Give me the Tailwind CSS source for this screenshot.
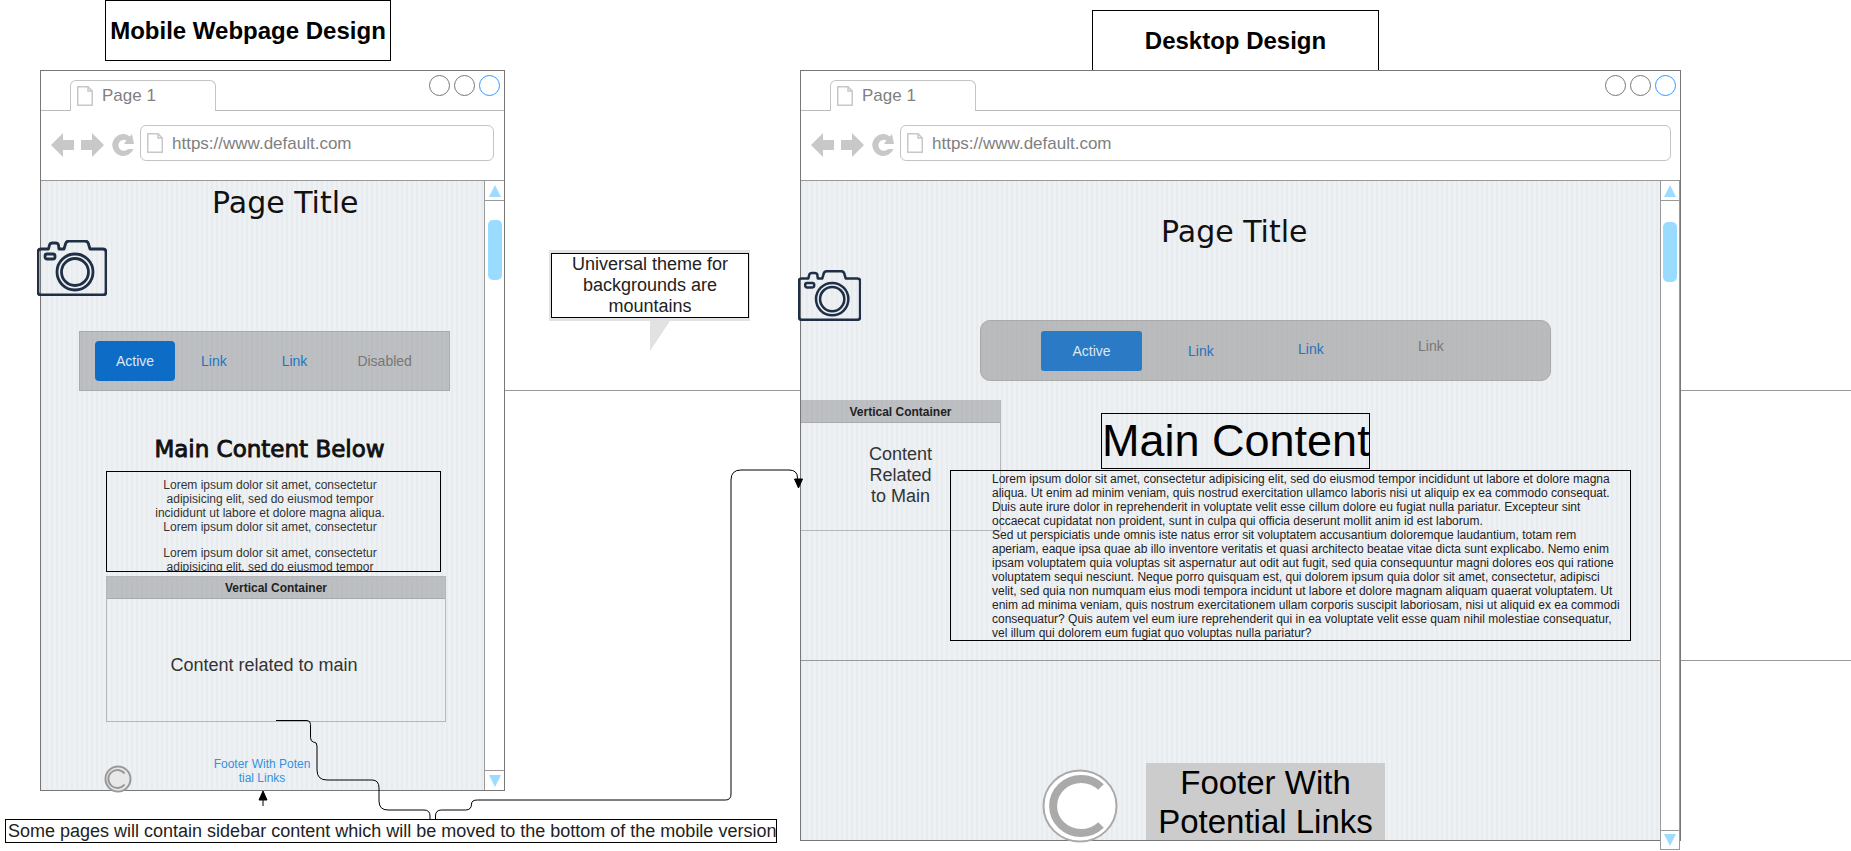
<!DOCTYPE html>
<html lang="en">
<head>
  <meta charset="UTF-8">
  <title>Mobile and Desktop Wireframes</title>
  <script src="https://cdn.jsdelivr.net/npm/@tailwindcss/browser@4"></script>
</head>
<body class="bg-white overflow-hidden font-['Liberation_Sans',Arial,sans-serif]">
  <!-- svg symbols used by both windows -->
  <svg class="hidden">
    <symbol id="doc" viewBox="0 0 16 20">
      <path d="M.75.75H11L15.25 5v14.25H.75zM11 .75V5h4.25" fill="#fff" stroke="#c8c8c8" stroke-width="1.5"/>
    </symbol>
    <symbol id="camera" viewBox="0 0 70 56">
      <g fill="none" stroke="#1f2f45" stroke-width="2.8" stroke-linejoin="round">
        <path d="M4 9h7.500l1-4q.5-2 3-2h3q2.500 0 3 2l.5 4h5l1.500-5q.5-3 3.500-3h16q3 0 3.500 3l1.500 5h13q3 0 3 3v40q0 3-3 3H4q-3 0-3-3V12q0-3 3-3z"/>
        <rect x="8" y="14" width="10" height="5" rx="2"/>
        <circle cx="38" cy="32" r="18"/>
        <circle cx="38" cy="32" r="13.500"/>
      </g>
    </symbol>
    <symbol id="back" viewBox="0 0 23 24"><path d="M0 12 12 0v7h11v10H12v7z" fill="#c8c8c8"/></symbol>
    <symbol id="forward" viewBox="0 0 23 24"><path d="M23 12 11 24v-7H0V7h11V0z" fill="#c8c8c8"/></symbol>
    <symbol id="reload" viewBox="0 0 22 22"><path d="M11 0a11 11 0 0 1 6.800 2.400L20 0l2 10H12l2.500-3.500A5.500 5.500 0 1 0 16 15h5.500A11 11 0 1 1 11 0z" fill="#c8c8c8"/></symbol>
  </svg>

  <main class="relative w-[1851px] h-[851px]">
    <!-- long rulers behind the windows -->
    <div class="absolute left-[40px] top-[390px] w-[1811px] h-px bg-[#999]"></div>
    <div class="absolute left-[1680px] top-[660px] w-[171px] h-px bg-[#999]"></div>

    <!-- diagram titles -->
    <div class="absolute left-[105px] top-0 w-[286px] h-[61px] border border-black flex items-center justify-center text-[24px] font-bold text-black">Mobile Webpage Design</div>
    <div class="absolute left-[1092px] top-[10px] w-[287px] h-[61px] border border-black flex items-center justify-center text-[24px] font-bold text-black">Desktop Design</div>

    <!-- mobile window -->
    <section class="absolute left-[40px] top-[70px] w-[465px] h-[721px] border border-[#777] bg-white flex flex-col">
      <div class="h-[40px] border-b border-[#bbb] flex items-end justify-between shrink-0">
        <div class="ml-[29px] -mb-px w-[146px] h-[31px] bg-white border border-b-0 border-[#c4c4c4] rounded-t-[6px] flex items-center pl-[6px] gap-[9px] text-[17px] text-[#808080]">
          <svg class="w-[16px] h-[20px]"><use href="#doc"/></svg>
          <span>Page 1</span>
        </div>
        <div class="self-start flex gap-[4px] mt-[4px] mr-[4px]">
          <span class="w-[21px] h-[21px] rounded-full border border-[#777]"></span>
          <span class="w-[21px] h-[21px] rounded-full border border-[#777]"></span>
          <span class="w-[21px] h-[21px] rounded-full border border-[#39f]"></span>
        </div>
      </div>
      <div class="h-[70px] flex items-start pt-[14px] pl-[10px] shrink-0 border-b border-[#999]">
        <svg class="w-[23px] h-[24px] mt-[8px]"><use href="#back"/></svg>
        <svg class="w-[23px] h-[24px] mt-[8px] ml-[7px]"><use href="#forward"/></svg>
        <svg class="w-[22px] h-[22px] mt-[9px] ml-[8px]"><use href="#reload"/></svg>
        <div class="ml-[6px] w-[354px] h-[36px] border border-[#c4c4c4] rounded-[6px] flex items-center pl-[6px] gap-[9px] text-[17px] text-[#808080]">
          <svg class="w-[16px] h-[20px]"><use href="#doc"/></svg>
          <span class="pt-[1px]">https://www.default.com</span>
        </div>
      </div>
      <div class="flex-1 flex min-h-0">
        <div class="relative w-[443px] bg-[repeating-linear-gradient(90deg,#e9ecef_0,#e9ecef_2px,#eef1f4_2px,#eef1f4_5px)]">
          <h1 class="absolute left-[171px] w-[145px] top-[5px] text-center whitespace-nowrap text-[30px] leading-[34px] text-[#111] font-['DejaVu_Sans',sans-serif]">Page Title</h1>
          <nav class="absolute left-[38px] top-[150px] w-[371px] h-[60px] bg-[#8c8e90]/50 border border-[#aaa] flex items-center text-[14px]">
            <span class="ml-[15px] w-[80px] h-[40px] rounded-[4px] bg-[#0d6dc6] text-[#dfe6ee] flex items-center justify-center">Active</span>
            <span class="ml-[26px] text-[#1f73c4]">Link</span>
            <span class="ml-[55px] text-[#1f73c4]">Link</span>
            <span class="ml-[50px] text-[#777]">Disabled</span>
          </nav>
          <h2 class="absolute left-[61px] w-[335px] top-[254px] text-center text-[23px] leading-[28px] font-normal [-webkit-text-stroke:0.9px_#111] text-[#111] font-['DejaVu_Sans',sans-serif] whitespace-nowrap">Main Content Below</h2>
          <div class="absolute left-[65px] top-[290px] w-[335px] h-[101px] border border-black overflow-hidden text-center text-[12px] leading-[14px] text-[#333] pt-[6px] pl-[36px] pr-[43px]">
            Lorem ipsum dolor sit amet, consectetur adipisicing elit, sed do eiusmod tempor incididunt ut labore et dolore magna aliqua. Lorem ipsum dolor sit amet, consectetur
            <p class="mt-[12px]">Lorem ipsum dolor sit amet, consectetur adipisicing elit, sed do eiusmod tempor</p>
          </div>
          <div class="absolute left-[65px] top-[395px] w-[340px] h-[146px] border border-[#b4b8bb] flex flex-col">
            <div class="h-[22px] bg-[#8c8e90]/50 border-b border-[#aaa] flex items-center justify-center text-[12px] font-bold text-[#222]">Vertical Container</div>
            <div class="flex-1 flex items-center justify-center pr-[24px] pt-[10px] text-[18px] text-[#333]">Content related to main</div>
          </div>
          <svg class="absolute left-[63px] top-[584px] w-[28px] h-[28px]" viewBox="0 0 28 28"><circle cx="14" cy="14" r="12.500" fill="#e8e8e8" stroke="#999" stroke-width="2"/><path d="M20.500 8.500a9 9 0 1 0 0 11" fill="none" stroke="#999" stroke-width="2"/></svg>
          <p class="absolute left-[160px] top-[576px] w-[122px] text-center text-[12px] leading-[14px] text-[#3490e0] break-all">Footer With Poten<br>tial Links</p>
        </div>
        <div class="w-[20px] border-l border-[#999] flex flex-col justify-between">
          <div class="h-[20px] border-b border-[#999] flex items-center justify-center"><span class="w-0 h-0 border-x-[6px] border-x-transparent border-b-[12px] border-b-[#9ddcff]"></span></div>
          <div class="mx-auto mb-auto mt-[19px] w-[14px] h-[60px] rounded-[5px] bg-[#99dcff]"></div>
          <div class="h-[20px] border-t border-[#999] flex items-center justify-center"><span class="w-0 h-0 border-x-[6px] border-x-transparent border-t-[12px] border-t-[#9ddcff]"></span></div>
        </div>
      </div>
    </section>
    <svg class="absolute left-[37px] top-[240px] w-[70px] h-[56px]"><use href="#camera"/></svg>

    <!-- speech bubble -->
    <div class="absolute left-[549px] top-[250px] w-[201px] h-[71px] bg-[#e2e2e2] p-[3px] pl-[2px]">
      <div class="w-[198px] h-[65px] bg-white border border-black text-center text-[18px] leading-[21px] text-[#222]">Universal theme for<br>backgrounds are<br>mountains</div>
    </div>
    <span class="absolute left-[650px] top-[321px] w-0 h-0 border-r-[20px] border-r-transparent border-t-[30px] border-t-[#e2e2e2]"></span>

    <!-- desktop window -->
    <section class="absolute left-[800px] top-[70px] w-[881px] h-[771px] border border-[#777] bg-white flex flex-col">
      <div class="h-[40px] border-b border-[#bbb] flex items-end justify-between shrink-0">
        <div class="ml-[29px] -mb-px w-[146px] h-[31px] bg-white border border-b-0 border-[#c4c4c4] rounded-t-[6px] flex items-center pl-[6px] gap-[9px] text-[17px] text-[#808080]">
          <svg class="w-[16px] h-[20px]"><use href="#doc"/></svg>
          <span>Page 1</span>
        </div>
        <div class="self-start flex gap-[4px] mt-[4px] mr-[4px]">
          <span class="w-[21px] h-[21px] rounded-full border border-[#777]"></span>
          <span class="w-[21px] h-[21px] rounded-full border border-[#777]"></span>
          <span class="w-[21px] h-[21px] rounded-full border border-[#39f]"></span>
        </div>
      </div>
      <div class="h-[70px] flex items-start pt-[14px] pl-[10px] shrink-0 border-b border-[#999]">
        <svg class="w-[23px] h-[24px] mt-[8px]"><use href="#back"/></svg>
        <svg class="w-[23px] h-[24px] mt-[8px] ml-[7px]"><use href="#forward"/></svg>
        <svg class="w-[22px] h-[22px] mt-[9px] ml-[8px]"><use href="#reload"/></svg>
        <div class="ml-[6px] w-[771px] h-[36px] border border-[#c4c4c4] rounded-[6px] flex items-center pl-[6px] gap-[9px] text-[17px] text-[#808080]">
          <svg class="w-[16px] h-[20px]"><use href="#doc"/></svg>
          <span class="pt-[1px]">https://www.default.com</span>
        </div>
      </div>
      <div class="flex-1 flex min-h-0">
        <div class="relative w-[859px] bg-[repeating-linear-gradient(90deg,#e9ecef_0,#e9ecef_2px,#eef1f4_2px,#eef1f4_5px)]">
          <h1 class="absolute left-[360px] top-[34px] w-[145px] text-center whitespace-nowrap text-[30px] leading-[34px] text-[#111] font-['DejaVu_Sans',sans-serif]">Page Title</h1>
          <nav class="absolute left-[179px] top-[139px] w-[571px] h-[61px] bg-[#868686]/50 border border-[#aaa] rounded-[10px] text-[14px]">
            <span class="absolute left-[60px] top-[10px] w-[101px] h-[40px] rounded-[3px] bg-[#2a7ac6] text-[#dfe6ee] flex items-center justify-center">Active</span>
            <span class="absolute left-[207px] top-[20px] text-[#2a72b8]">Link</span>
            <span class="absolute left-[317px] top-[18px] text-[#2a72b8]">Link</span>
            <span class="absolute left-[437px] top-[15px] text-[#777]">Link</span>
          </nav>
          <div class="absolute left-0 top-[219px] w-[200px] h-[131px] border-r border-b border-[#b4b8bb] flex flex-col">
            <div class="h-[23px] pt-[1px] bg-[#8c8e90]/50 border-b border-[#aaa] flex items-center justify-center text-[12px] font-bold text-[#222]">Vertical Container</div>
            <div class="text-center text-[18px] leading-[21px] text-[#333] pt-[21px]">Content<br>Related<br>to Main</div>
          </div>
          <div class="absolute left-0 right-0 top-[479px] h-px bg-[#999]"></div>
          <h2 class="absolute left-[300px] top-[232px] w-[269px] h-[56px] border border-black text-center text-[45px] leading-[54px] text-black whitespace-nowrap font-normal">Main Content</h2>
          <div class="absolute left-[149px] top-[289px] w-[681px] h-[171px] border border-black overflow-hidden pl-[41px] text-[12px] leading-[14px] text-[#222] whitespace-nowrap pt-[1px]">
            Lorem ipsum dolor sit amet, consectetur adipisicing elit, sed do eiusmod tempor incididunt ut labore et dolore magna<br>
            aliqua. Ut enim ad minim veniam, quis nostrud exercitation ullamco laboris nisi ut aliquip ex ea commodo consequat.<br>
            Duis aute irure dolor in reprehenderit in voluptate velit esse cillum dolore eu fugiat nulla pariatur. Excepteur sint<br>
            occaecat cupidatat non proident, sunt in culpa qui officia deserunt mollit anim id est laborum.<br>
            Sed ut perspiciatis unde omnis iste natus error sit voluptatem accusantium doloremque laudantium, totam rem<br>
            aperiam, eaque ipsa quae ab illo inventore veritatis et quasi architecto beatae vitae dicta sunt explicabo. Nemo enim<br>
            ipsam voluptatem quia voluptas sit aspernatur aut odit aut fugit, sed quia consequuntur magni dolores eos qui ratione<br>
            voluptatem sequi nesciunt. Neque porro quisquam est, qui dolorem ipsum quia dolor sit amet, consectetur, adipisci<br>
            velit, sed quia non numquam eius modi tempora incidunt ut labore et dolore magnam aliquam quaerat voluptatem. Ut<br>
            enim ad minima veniam, quis nostrum exercitationem ullam corporis suscipit laboriosam, nisi ut aliquid ex ea commodi<br>
            consequatur? Quis autem vel eum iure reprehenderit qui in ea voluptate velit esse quam nihil molestiae consequatur,<br>
            vel illum qui dolorem eum fugiat quo voluptas nulla pariatur?
          </div>
          <svg class="absolute left-[241px] top-[588px] w-[76px] h-[74px]" viewBox="0 0 76 74"><ellipse cx="38" cy="37" rx="36.500" ry="35.500" fill="#fff" stroke="#aaa" stroke-width="2"/><path d="M59 18a28 27 0 1 0 0 38" fill="none" stroke="#aaa" stroke-width="8"/></svg>
          <div class="absolute left-[345px] top-[582px] w-[239px] h-[77px] bg-[#ccc] text-center text-[33px] leading-[39px] text-black">Footer With<br>Potential Links</div>
        </div>
        <div class="relative w-[20px] -mb-[10px] border-x border-[#999] flex flex-col justify-between bg-white -mr-px">
          <div class="h-[20px] border-b border-[#999] flex items-center justify-center"><span class="w-0 h-0 border-x-[6px] border-x-transparent border-b-[12px] border-b-[#9ddcff]"></span></div>
          <div class="mx-auto mb-auto mt-[21px] w-[14px] h-[60px] rounded-[5px] bg-[#99dcff]"></div>
          <div class="h-[20px] border-y border-[#999] flex items-center justify-center"><span class="w-0 h-0 border-x-[6px] border-x-transparent border-t-[12px] border-t-[#9ddcff]"></span></div>
        </div>
      </div>
    </section>
    <svg class="absolute left-[798px] top-[270px] w-[63px] h-[51px]"><use href="#camera"/></svg>

    <!-- sidebar note and connectors -->
    <div class="absolute left-[5px] top-[819px] w-[772px] h-[24px] border border-black bg-white flex items-center pl-[2px] text-[18px] text-[#222] whitespace-nowrap">Some pages will contain sidebar content which will be moved to the bottom of the mobile version</div>
    <svg class="absolute left-0 top-0 w-[1851px] h-[851px] pointer-events-none" viewBox="0 0 1851 851" fill="none" stroke="#000" stroke-width="1">
      <path d="M276 720.500h31q3.500 0 3.500 4v13q0 4 3 4.500 3.500 0 3.500 4v24q0 10 10 10h45q7 0 7 8v13q0 9 9 9h36q6 0 6 6v4"/>
      <path d="M435.500 819v-3q0-6 6-6h24q6 0 6-6 0-4 6-4h248q5.500 0 5.500-6V480q0-10 10-10h48q8.500 0 8.500 8v6"/>
      <path d="M263 806V795"/>
      <path d="M263 791l-4 9h8zM798.500 488l-4-9h8z" fill="#000"/>
    </svg>
  </main>
</body>
</html>
